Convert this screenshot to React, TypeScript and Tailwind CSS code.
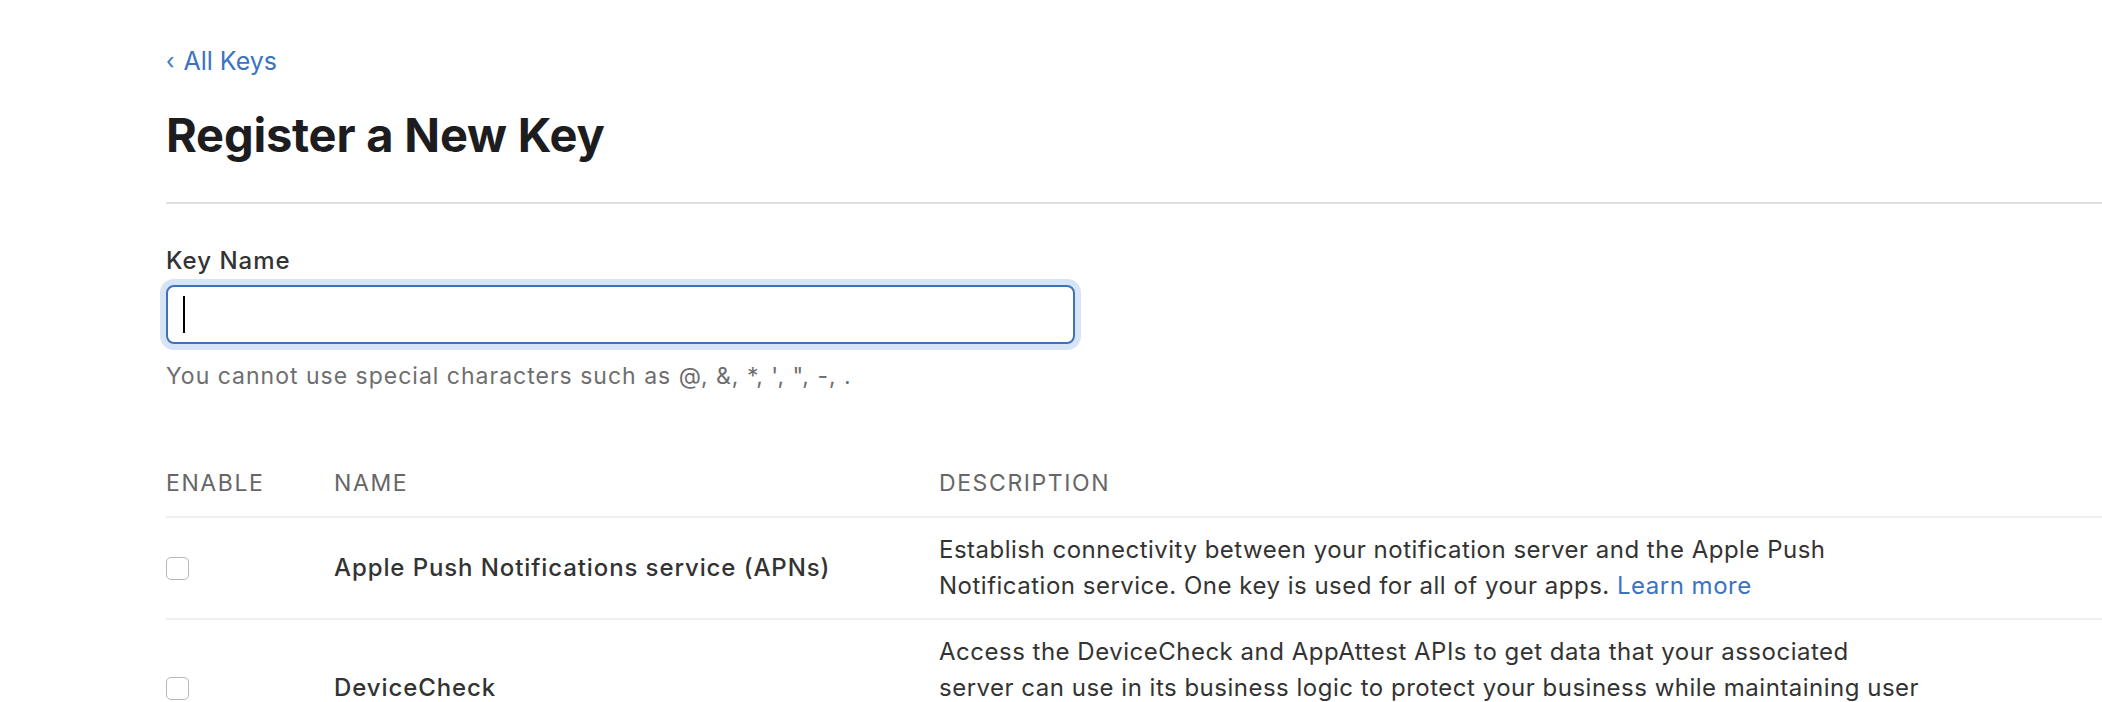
import { useState } from "react";

const services = [
  {
    name: "Apple Push Notifications service (APNs)",
    description:
      "Establish connectivity between your notification server and the Apple Push Notification service. One key is used for all of your apps.",
  },
  {
    name: "DeviceCheck",
    description:
      "Access the DeviceCheck and AppAttest APIs to get data that your associated server can use in its business logic to protect your business while maintaining user privacy.",
  },
];

export default function App() {
  const [keyName, setKeyName] = useState("");
  const [enabled, setEnabled] = useState<boolean[]>(services.map(() => false));

  return (
    <div className="min-h-screen bg-white font-['Inter','Helvetica_Neue',sans-serif] text-[#333]">
      <div className="pl-[166px] pt-[46px]">
        {/* Back link */}
        <a href="#" className="flex items-center gap-[9px] text-[25px] leading-[30px] text-[#3a74bf]">
          <span className="text-[22px]">‹</span>
          <span>All Keys</span>
        </a>

        <h1 className="mt-[31px] text-[47px] font-bold leading-[56px] tracking-[-0.2px] text-[#1d1d1f]">
          Register a New Key
        </h1>

        <div className="mt-[39px] h-[2px] bg-[#e0e0e0]" />

        {/* Key name */}
        <div className="mt-[43px]">
          <label className="block text-[24px] font-medium leading-[28px] tracking-[1px] text-[#333]">Key Name</label>
          <div className="relative mt-[10px] w-[909px] rounded-[8px] ring-[6px] ring-[#d6e4f5]">
            <input
              autoFocus
              value={keyName}
              onChange={(e) => setKeyName(e.target.value)}
              className="block h-[59px] w-full rounded-[8px] border-2 border-[#3b72b8] px-[16px] text-[24px] text-[#333] caret-transparent outline-none"
            />
            {keyName === "" && (
              <span className="pointer-events-none absolute left-[17px] top-[11px] h-[37px] w-[2px] bg-black" />
            )}
          </div>
          <p className="mt-[19px] text-[23px] leading-[26px] tracking-[1px] text-[#6e6e6e]">
            You cannot use special characters such as @, &amp;, *, ', ", -, .
          </p>
        </div>

        {/* Services table */}
        <div className="mt-[80px]">
          <div className="flex border-b-2 border-[#f0f0f0] pb-[19px] text-[23px] leading-[28px] tracking-[1.6px] text-[#666]">
            <div className="w-[168px]">ENABLE</div>
            <div className="w-[605px]">NAME</div>
            <div>DESCRIPTION</div>
          </div>
          {services.map((s, i) => (
            <div key={s.name} className="flex items-center border-b-2 border-[#f0f0f0] py-[14px]">
              <div className="w-[168px]">
                <input
                  type="checkbox"
                  checked={enabled[i]}
                  onChange={() => setEnabled(enabled.map((v, j) => (j === i ? !v : v)))}
                  className="block h-[23px] w-[23px] appearance-none rounded-[5px] border border-[#b8b8b8] bg-white checked:bg-[#3b72b8]"
                />
              </div>
              <div className="w-[605px] text-[24px] font-medium leading-[36px] tracking-[0.9px] text-[#333]">
                {s.name}
              </div>
              <p className="w-[992px] text-[24px] leading-[36px] tracking-[0.5px] text-[#333]">
                {s.description}{" "}
                <a href="#" className="text-[#3a74bf]">
                  Learn more
                </a>
              </p>
            </div>
          ))}
        </div>
      </div>
    </div>
  );
}
